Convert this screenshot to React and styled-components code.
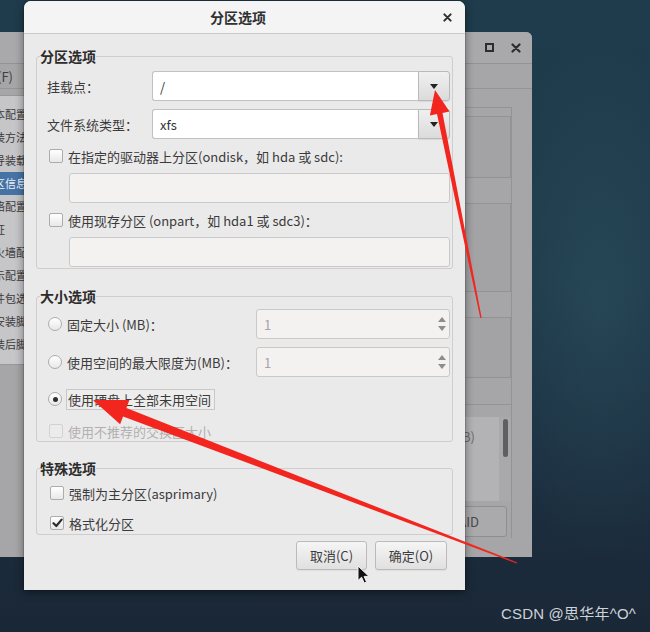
import React from 'react';
import styled, { createGlobalStyle } from 'styled-components';

const GlobalStyle = createGlobalStyle`
  html, body { margin: 0; padding: 0; }
  body {
    width: 650px; height: 632px; overflow: hidden;
    font-family: "Noto Sans CJK SC", "Noto Sans", sans-serif;
  }
  * { box-sizing: border-box; }
`;

const Desktop = styled.div`
  position: relative;
  width: 650px;
  height: 632px;
  overflow: hidden;
  background:
    radial-gradient(ellipse 120px 260px at 600px 300px, rgba(48, 86, 100, 0.45), transparent),
    linear-gradient(180deg, #1f3c4c 0%, #1e394a 45%, #1c2f40 75%, #1a2736 100%);
`;

/* ---------- background window (dimmed) ---------- */
const BgWindow = styled.div`
  position: absolute;
  left: -30px;
  top: 32px;
  width: 562px;
  height: 525px;
  border-radius: 6px 6px 0 0;
  background: #a6a5a7;
  display: flex;
  flex-direction: column;
  overflow: hidden;
`;

const BgHeader = styled.div`
  height: 32px;
  flex: none;
  border-bottom: 1px solid #939294;
  background: #a9a8aa;
  display: flex;
  align-items: center;
  justify-content: flex-end;
  gap: 17px;
  padding-right: 11px;
`;

const BgMenubar = styled.div`
  height: 25px;
  flex: none;
  border-bottom: 1px solid #959496;
  display: flex;
  align-items: center;
  padding-left: 1px;
  font-size: 13px;
  color: #3f3f41;
`;

const BgBody = styled.div`
  flex: 1;
  display: flex;
  align-items: flex-start;
`;

const Sidebar = styled.div`
  width: 130px;
  margin-top: 6px;
  padding-top: 7px;
  padding-bottom: 8px;
  background: #c6c5c7;
  border: 1px solid #98979a;
  display: flex;
  flex-direction: column;
`;

const SideItem = styled.div`
  height: 23px;
  line-height: 23px;
  padding-left: 12px;
  font-size: 11px;
  white-space: nowrap;
  color: ${p => (p.$active ? '#f0f2f6' : '#3a3a3c')};
  background: ${p => (p.$active ? '#4673a6' : 'transparent')};
`;

const Spacer = styled.div`
  flex: 1;
`;

const RightPane = styled.div`
  width: 150px;
  margin-right: 20px;
  margin-top: 18px;
  height: 431px;
  border-top: 1px solid #939294;
  border-right: 1px solid #939294;
  display: flex;
  flex-direction: column;
  padding-top: 8px;
`;

const PaneBox = styled.div`
  height: ${p => p.$h}px;
  margin-bottom: ${p => p.$mb}px;
  border: 1px solid #939294;
  border-left: none;
  background: #a3a2a4;
`;

const ListBox = styled.div`
  height: 98px;
  border-top: 1px solid #939294;
  padding-top: 12px;
  display: flex;
`;

const ListInner = styled.div`
  flex: 1;
  height: 84px;
  background: #b3b2b4;
  display: flex;
  justify-content: flex-end;
  padding-top: 10px;
  font-size: 13px;
  color: #6c6b6d;
`;

const ListText = styled.span`
  margin-right: 24px;
`;

const ScrollTrack = styled.div`
  width: 12px;
  height: 84px;
  background: #a9a8aa;
  display: flex;
  justify-content: center;
  padding-top: 2px;
`;

const ScrollThumb = styled.div`
  width: 5px;
  height: 38px;
  border-radius: 3px;
  background: #5f5e60;
`;

const BgButton = styled.div`
  height: 31px;
  margin-top: 4px;
  margin-right: 4px;
  border: 1px solid #8f8e90;
  border-radius: 3px;
  background: #aaa9ab;
  display: flex;
  align-items: center;
  justify-content: flex-end;
  padding-right: 27px;
  font-size: 13px;
  color: #4a494b;
`;

/* ---------- dialog ---------- */
const Dialog = styled.div`
  position: absolute;
  left: 24px;
  top: 1px;
  width: 441px;
  height: 589px;
  border-radius: 7px 7px 0 0;
  background: #ebeaea;
  box-shadow: 0 2px 10px rgba(0, 0, 0, 0.45), 0 0 0 1px rgba(0, 0, 0, 0.12);
  display: flex;
  flex-direction: column;
  overflow: hidden;
`;

const TitleBar = styled.div`
  height: 33px;
  flex: none;
  background: #f5f4f4;
  border-bottom: 1px solid #cbc9c9;
  display: grid;
  grid-template-columns: 1fr auto 1fr;
  align-items: center;
  padding-right: 13px;
`;

const Title = styled.div`
  grid-column: 2;
  font-size: 14px;
  font-weight: 700;
  color: #2e3032;
`;

const CloseBtn = styled.div`
  grid-column: 3;
  justify-self: end;
  display: flex;
`;

const Body = styled.div`
  flex: 1;
  display: flex;
  flex-direction: column;
  padding: 14px 12px 17px;
`;

const Frame = styled.fieldset`
  margin: 0 0 ${p => p.$mb || 0}px;
  padding: 0 2px ${p => p.$pb || 0}px 3px;
  border: 1px solid #cfcdcd;
  border-radius: 3px;
  min-width: 0;
`;

const Legend = styled.legend`
  padding: 0;
  font-size: 14px;
  line-height: 16px;
  font-weight: 700;
  color: #2c2c2c;
`;

const FrameContent = styled.div`
  display: flex;
  flex-direction: column;
  padding-left: 7px;
  padding-top: ${p => p.$pt}px;
`;

const FieldRow = styled.div`
  display: grid;
  grid-template-columns: ${p => p.$label}px 1fr;
  align-items: center;
  margin-bottom: ${p => p.$mb || 0}px;
`;

const Label = styled.span`
  font-size: 13px;
  color: ${p => (p.$disabled ? '#b2b0b0' : '#3b3b3b')};
  white-space: nowrap;
`;

const Combo = styled.div`
  display: flex;
  height: 30px;
`;

const ComboEntry = styled.div`
  flex: 1;
  background: #ffffff;
  border: 1px solid #c2c0c0;
  border-right: none;
  border-radius: 3px 0 0 3px;
  padding-left: 7px;
  display: flex;
  align-items: center;
  font-size: 13px;
  color: #333;
`;

const ComboButton = styled.div`
  width: 32px;
  border: 1px solid #bab8b8;
  border-radius: 0 3px 3px 0;
  background: linear-gradient(#f1f0f0, #dcdbdb);
  display: flex;
  align-items: center;
  justify-content: center;
  box-shadow: 0 1px 1px rgba(0, 0, 0, 0.08);
`;

const CheckRow = styled.div`
  display: flex;
  align-items: center;
  gap: ${p => p.$gap || 5}px;
  height: ${p => p.$h || 20}px;
  padding-left: ${p => p.$pl || 2}px;
  margin-bottom: ${p => p.$mb || 0}px;
`;

const Box = styled.div`
  width: 14px;
  height: 14px;
  flex: none;
  border: 1px solid ${p => (p.$disabled ? '#d3d1d1' : '#adabab')};
  border-radius: 2px;
  background: ${p => (p.$disabled ? '#ecebeb' : 'linear-gradient(#ffffff, #e9e8e8)')};
  display: flex;
  align-items: center;
  justify-content: center;
`;

const Radio = styled.div`
  width: 14px;
  height: 14px;
  flex: none;
  border: 1px solid #adabab;
  border-radius: 50%;
  background: linear-gradient(#ffffff, #e9e8e8);
  display: flex;
  align-items: center;
  justify-content: center;
`;

const RadioDot = styled.div`
  width: 5px;
  height: 5px;
  border-radius: 50%;
  background: #2e2e2e;
`;

const Entry = styled.div`
  height: 30px;
  margin-left: 22px;
  margin-bottom: ${p => p.$mb || 0}px;
  background: #f3f2f1;
  border: 1px solid #cac8c8;
  border-radius: 3px;
`;

const Spin = styled.div`
  height: 30px;
  background: #f3f2f1;
  border: 1px solid #cac8c8;
  border-radius: 3px;
  display: flex;
  align-items: center;
  padding-left: 7px;
  font-size: 13px;
  color: #a6a4a4;
`;

const SpinValue = styled.span`
  flex: 1;
`;

const SpinArrows = styled.div`
  width: 14px;
  height: 100%;
  display: flex;
  flex-direction: column;
  justify-content: space-between;
  align-items: center;
  padding: 7px 0 7px;
`;

const FocusBox = styled.div`
  height: 21px;
  display: flex;
  align-items: center;
  padding: 0 3px 0 1px;
  border: 1px solid #c9c7c7;
  background: #eeeded;
`;

const ButtonRow = styled.div`
  display: flex;
  justify-content: flex-end;
  gap: 8px;
  margin-top: 6px;
  padding-right: 6px;
`;

const Button = styled.div`
  width: ${p => p.$w}px;
  height: 29px;
  border: 1px solid #bcbaba;
  border-radius: 3px;
  background: linear-gradient(#f6f5f5, #e1e0e0);
  box-shadow: 0 1px 1px rgba(0, 0, 0, 0.06);
  display: flex;
  align-items: center;
  justify-content: center;
  font-size: 13px;
  color: #3c3c3c;
`;

/* ---------- overlays ---------- */
const Overlay = styled.svg`
  position: absolute;
  left: 0;
  top: 0;
  pointer-events: none;
`;

const Cursor = styled.svg`
  position: absolute;
  left: 357px;
  top: 565px;
`;

const Watermark = styled.div`
  position: absolute;
  right: 14px;
  top: 602px;
  font-family: "Liberation Sans", "Noto Sans CJK SC", sans-serif;
  font-size: 15px;
  color: rgba(232, 236, 240, 0.88);
  letter-spacing: 0.2px;
`;

/* ---------- icons ---------- */
const DownTri = ({ c = '#222', w = 8, h = 5 }) => (
  <svg width={w} height={h} viewBox={`0 0 ${w} ${h}`}>
    <polygon points={`0,0 ${w},0 ${w / 2},${h}`} fill={c} />
  </svg>
);
const UpTri = ({ c = '#8e8c8c', w = 8, h = 5 }) => (
  <svg width={w} height={h} viewBox={`0 0 ${w} ${h}`}>
    <polygon points={`0,${h} ${w},${h} ${w / 2},0`} fill={c} />
  </svg>
);
const XIcon = ({ s = 9, c = '#2d2d2d' }) => (
  <svg width={s} height={s} viewBox="0 0 10 10">
    <path d="M1.5 1.5 L8.5 8.5 M8.5 1.5 L1.5 8.5" stroke={c} strokeWidth="2.2" strokeLinecap="round" />
  </svg>
);
const MaxIcon = () => (
  <svg width="9" height="9" viewBox="0 0 9 9">
    <rect x="1" y="1" width="7" height="7" fill="none" stroke="#2d2c2e" strokeWidth="2" />
  </svg>
);
const Check = () => (
  <svg width="11" height="10" viewBox="0 0 11 10">
    <path d="M1.5 5.2 L4.3 8 L9.6 1.6" fill="none" stroke="#2b2b2b" strokeWidth="2.2" strokeLinecap="round" strokeLinejoin="round" />
  </svg>
);

function arrowPoints(T, S, L, H, w1, w0) {
  const dx = T[0] - S[0];
  const dy = T[1] - S[1];
  const len = Math.hypot(dx, dy);
  const ux = dx / len, uy = dy / len;
  const nx = -uy, ny = ux;
  const B = [T[0] - ux * L, T[1] - uy * L];
  const pts = [
    [S[0] + nx * w0, S[1] + ny * w0],
    [B[0] + nx * w1, B[1] + ny * w1],
    [B[0] + nx * H, B[1] + ny * H],
    T,
    [B[0] - nx * H, B[1] - ny * H],
    [B[0] - nx * w1, B[1] - ny * w1],
    [S[0] - nx * w0, S[1] - ny * w0],
  ];
  return pts.map(p => `${p[0].toFixed(1)},${p[1].toFixed(1)}`).join(' ');
}

const sideItems = ['基本配置', '安装方法', '引导装载程序选项', '分区信息', '网络配置', '验证', '防火墙配置', '显示配置', '软件包选择', '预安装脚本', '安装后脚本'];

export default function App() {
  return (
    <Desktop>
      <GlobalStyle />
      <BgWindow>
        <BgHeader>
          <MaxIcon />
          <XIcon s={10} />
        </BgHeader>
        <BgMenubar>文件(F)</BgMenubar>
        <BgBody>
          <Sidebar>
            {sideItems.map(t => (
              <SideItem key={t} $active={t === '分区信息'}>{t}</SideItem>
            ))}
          </Sidebar>
          <Spacer />
          <RightPane>
            <PaneBox $h={62} $mb={25} />
            <PaneBox $h={89} $mb={25} />
            <PaneBox $h={61} $mb={26} />
            <ListBox>
              <ListInner><ListText>(MB)</ListText></ListInner>
              <ScrollTrack><ScrollThumb /></ScrollTrack>
            </ListBox>
            <BgButton>RAID</BgButton>
          </RightPane>
        </BgBody>
      </BgWindow>

      <Dialog>
        <TitleBar>
          <Title>分区选项</Title>
          <CloseBtn><XIcon s={9} /></CloseBtn>
        </TitleBar>
        <Body>
          <Frame $pb={1} $mb={19}>
            <Legend>分区选项</Legend>
            <FrameContent $pt={7}>
              <FieldRow $label={105} $mb={8}>
                <Label>挂载点：</Label>
                <Combo>
                  <ComboEntry>/</ComboEntry>
                  <ComboButton><DownTri w={8} h={5} /></ComboButton>
                </Combo>
              </FieldRow>
              <FieldRow $label={105} $mb={7}>
                <Label>文件系统类型：</Label>
                <Combo>
                  <ComboEntry>xfs</ComboEntry>
                  <ComboButton><DownTri w={8} h={5} /></ComboButton>
                </Combo>
              </FieldRow>
              <CheckRow $mb={7}>
                <Box />
                <Label>在指定的驱动器上分区(ondisk，如 hda 或 sdc):</Label>
              </CheckRow>
              <Entry $mb={7} />
              <CheckRow $mb={7}>
                <Box />
                <Label>使用现存分区 (onpart，如 hda1 或 sdc3)：</Label>
              </CheckRow>
              <Entry />
            </FrameContent>
          </Frame>

          <Frame $pb={0} $mb={18}>
            <Legend>大小选项</Legend>
            <FrameContent $pt={5}>
              <FieldRow $label={209} $mb={8}>
                <CheckRow $pl={1}>
                  <Radio />
                  <Label>固定大小 (MB)：</Label>
                </CheckRow>
                <Spin>
                  <SpinValue>1</SpinValue>
                  <SpinArrows><UpTri w={8} h={5} /><DownTri c="#8e8c8c" w={8} h={5} /></SpinArrows>
                </Spin>
              </FieldRow>
              <FieldRow $label={209} $mb={11}>
                <CheckRow $pl={1}>
                  <Radio />
                  <Label>使用空间的最大限度为(MB)：</Label>
                </CheckRow>
                <Spin>
                  <SpinValue>1</SpinValue>
                  <SpinArrows><UpTri w={8} h={5} /><DownTri c="#8e8c8c" w={8} h={5} /></SpinArrows>
                </Spin>
              </FieldRow>
              <CheckRow $pl={1} $gap={4} $h={22} $mb={11}>
                <Radio><RadioDot /></Radio>
                <FocusBox><Label>使用硬盘上全部未用空间</Label></FocusBox>
              </CheckRow>
              <CheckRow $h={20}>
                <Box $disabled />
                <Label $disabled>使用不推荐的交换区大小</Label>
              </CheckRow>
            </FrameContent>
          </Frame>

          <Frame $pb={1}>
            <Legend>特殊选项</Legend>
            <FrameContent $pt={7}>
              <CheckRow $pl={3} $mb={10}>
                <Box />
                <Label>强制为主分区(asprimary)</Label>
              </CheckRow>
              <CheckRow $pl={3}>
                <Box><Check /></Box>
                <Label>格式化分区</Label>
              </CheckRow>
            </FrameContent>
          </Frame>

          <ButtonRow>
            <Button $w={71}>取消(C)</Button>
            <Button $w={72}>确定(O)</Button>
          </ButtonRow>
        </Body>
      </Dialog>

      <Cursor width="14" height="20" viewBox="0 0 14 20">
        <path d="M1 1 L1 15.5 L4.6 12.2 L7.2 18 L9.6 17 L7.1 11.4 L12 11.4 Z" fill="#111" stroke="#f4f4f4" strokeWidth="1" strokeLinejoin="round" />
      </Cursor>

      <Overlay width="650" height="632" viewBox="0 0 650 632">
        <polygon points={arrowPoints([435, 90], [481, 318], 24, 10, 2.8, 0.7)} fill="#f2261f" />
        <polygon points={arrowPoints([93, 400], [517, 563], 34, 13, 4.5, 0.6)} fill="#f2261f" />
      </Overlay>

      <Watermark>CSDN @思华年^O^</Watermark>
    </Desktop>
  );
}
